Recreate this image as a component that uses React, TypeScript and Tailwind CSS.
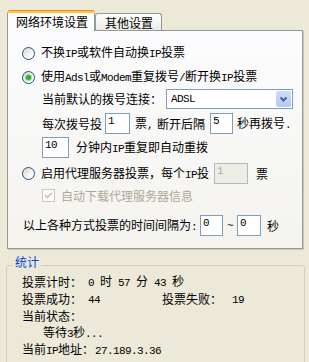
import React from "react";

const L = ({ children }: { children: React.ReactNode }) => (
  <span className="font-['Liberation_Mono',monospace] text-[11px] tracking-[-0.6px] whitespace-pre">
    {children}
  </span>
);

function Radio({ checked }: { checked?: boolean }) {
  return (
    <span className="w-[13px] h-[13px] shrink-0 rounded-full border border-[#1C5180] bg-[linear-gradient(135deg,#D6D5CE,#FFFFFF_75%)] flex items-center justify-center">
      {checked && (
        <span className="w-[5px] h-[5px] rounded-full bg-[#35AE35] shadow-[0_0_0_1px_#9ADB9A]" />
      )}
    </span>
  );
}

function Box({
  className,
  children,
  disabled,
}: {
  className: string;
  children: React.ReactNode;
  disabled?: boolean;
}) {
  return (
    <span
      className={
        "h-[21px] shrink-0 border flex items-center pl-[2px] pb-[5px] " +
        (disabled
          ? "border-[#B5B8C0] bg-[#EEEDE5] text-[#ACA899] "
          : "border-[#7F9DB9] bg-white ") +
        className
      }
    >
      {children}
    </span>
  );
}

export default function App() {
  return (
    <div className="w-[309px] h-[362px] overflow-hidden bg-[#ECE9D8] text-[12px] leading-[12px] text-black font-['Noto_Sans_CJK_SC',sans-serif] pt-[10px]">
      {/* tabs */}
      <div className="flex items-end h-[21px] pl-[7px]">
        <div className="relative z-10 h-[21px] w-[88px] flex flex-col rounded-t-[3px] overflow-hidden">
          <div className="h-[1px] mx-[1px] bg-[#E68B2C]" />
          <div className="h-[2px] bg-[#FFC73C]" />
          <div className="flex-1 border-x border-[#919B9C] bg-[#FCFCFE] pl-[8px] pb-[1px] flex items-center">
            网络环境设置
          </div>
        </div>
        <div className="h-[17px] w-[67px] mb-[1px] rounded-t-[3px] border border-b-0 border-[#919B9C] bg-[linear-gradient(#FFFFFF,#ECEBE6)] pl-[9px] pt-[1px] flex items-center">
          其他设置
        </div>
      </div>

      {/* panel */}
      <div className="relative -mt-px ml-[7px] w-[296px] h-[219px] border border-[#919B9C] bg-[linear-gradient(#FCFCFE,#F4F3EE)] shadow-[1px_1px_0_#C9C7B8] flex flex-col">
        <div className="mt-[15px] h-[14px] pl-[14px] flex items-center">
          <Radio />
          <span className="ml-[6px] whitespace-nowrap">
            不换<L>IP</L>或软件自动换<L>IP</L>投票
          </span>
        </div>
        <div className="mt-[10px] h-[14px] pl-[14px] flex items-center">
          <Radio checked />
          <span className="ml-[6px] whitespace-nowrap">
            使用<L>Adsl</L>或<L>Modem</L>重复拨号<L>/</L>断开换<L>IP</L>投票
          </span>
        </div>
        <div className="mt-[5px] h-[20px] pl-[34px] flex items-center">
          <span className="whitespace-nowrap">当前默认的拨号连接：</span>
          <div className="ml-[4px] w-[127px] h-[20px] shrink-0 border border-[#7F9DB9] bg-white flex items-center pl-[4px]">
            <L>ADSL</L>
            <span className="ml-auto mr-[1px] w-[15px] h-[16px] rounded-[2px] bg-[linear-gradient(#CEDCFC,#B4C9F6)] flex items-center justify-center">
              <svg width="15" height="16" viewBox="0 0 15 16">
                <path
                  d="M4.5 6.5 L7.5 9.5 L10.5 6.5"
                  stroke="#4D6185"
                  strokeWidth="2"
                  fill="none"
                />
              </svg>
            </span>
          </div>
        </div>
        <div className="mt-[4px] h-[21px] pl-[34px] flex items-center whitespace-nowrap">
          <span>每次拨号投</span>
          <Box className="ml-[3px] w-[25px]">
            <L>1</L>
          </Box>
          <span className="ml-[5px]">
            票<L>,</L>
          </span>
          <span className="ml-[4px]">断开后隔</span>
          <Box className="ml-[5px] w-[23px]">
            <L>5</L>
          </Box>
          <span className="ml-[4px]">
            秒再拨号<L>.</L>
          </span>
        </div>
        <div className="mt-[3px] h-[21px] pl-[34px] flex items-center whitespace-nowrap">
          <Box className="w-[27px]">
            <L>10</L>
          </Box>
          <span className="ml-[7px]">
            分钟内<L>IP</L>重复即自动重拨
          </span>
        </div>
        <div className="mt-[5px] h-[21px] pl-[14px] flex items-center whitespace-nowrap">
          <Radio />
          <span className="ml-[6px]">
            启用代理服务器投票，每个<L>IP</L>投
          </span>
          <Box className="ml-[5px] w-[34px]" disabled>
            <L>1</L>
          </Box>
          <span className="ml-[8px]">票</span>
        </div>
        <div className="mt-[5px] h-[13px] pl-[34px] flex items-center whitespace-nowrap">
          <span className="w-[13px] h-[13px] shrink-0 border border-[#CAC8BB] bg-white flex items-center justify-center">
            <svg width="9" height="9" viewBox="0 0 9 9">
              <path d="M1 4 L3.3 6.5 L8 1.8" stroke="#CAC8BB" strokeWidth="1.8" fill="none" />
            </svg>
          </span>
          <span className="ml-[6px] text-[#ACA899]">自动下载代理服务器信息</span>
        </div>
        <div className="mt-[13px] h-[21px] pl-[15px] flex items-center whitespace-nowrap">
          <span>
            以上各种方式投票的时间间隔为<L>:</L>
          </span>
          <Box className="ml-[3px] w-[23px]">
            <L>0</L>
          </Box>
          <span className="w-[14px] flex justify-center">
            <L>~</L>
          </span>
          <Box className="w-[24px]">
            <L>0</L>
          </Box>
          <span className="ml-[6px]">秒</span>
        </div>
      </div>

      {/* statistics */}
      <fieldset className="mt-[7px] ml-[6px] w-[299px] border border-[#D0D0BF] rounded-[3px] pl-[6px] pb-[10px]">
        <legend className="px-[2px] pb-[6px] leading-[12px] text-[#0046D5]">统计</legend>
        <div className="-mt-px pl-[9px] flex flex-col whitespace-nowrap">
          <div className="h-[17px] flex items-center">
            <span className="w-[66px] shrink-0">投票计时：</span>
            <span>
              <L>0 </L>时<L> 57 </L>分<L> 43 </L>秒
            </span>
          </div>
          <div className="h-[17px] flex items-center">
            <span className="w-[66px] shrink-0">投票成功：</span>
            <span className="w-[74px] shrink-0">
              <L>44</L>
            </span>
            <span className="w-[70px] shrink-0">投票失败：</span>
            <span>
              <L>19</L>
            </span>
          </div>
          <div className="h-[17px] flex items-center">
            <span>当前状态：</span>
          </div>
          <div className="h-[17px] flex items-center">
            <span className="ml-[21px]">
              等待<L>3</L>秒<L>...</L>
            </span>
          </div>
          <div className="h-[17px] flex items-center">
            <span className="shrink-0">
              当前<L>IP</L>地址：
            </span>
            <span className="ml-[1px]">
              <L>27.189.3.36</L>
            </span>
          </div>
        </div>
      </fieldset>
    </div>
  );
}
